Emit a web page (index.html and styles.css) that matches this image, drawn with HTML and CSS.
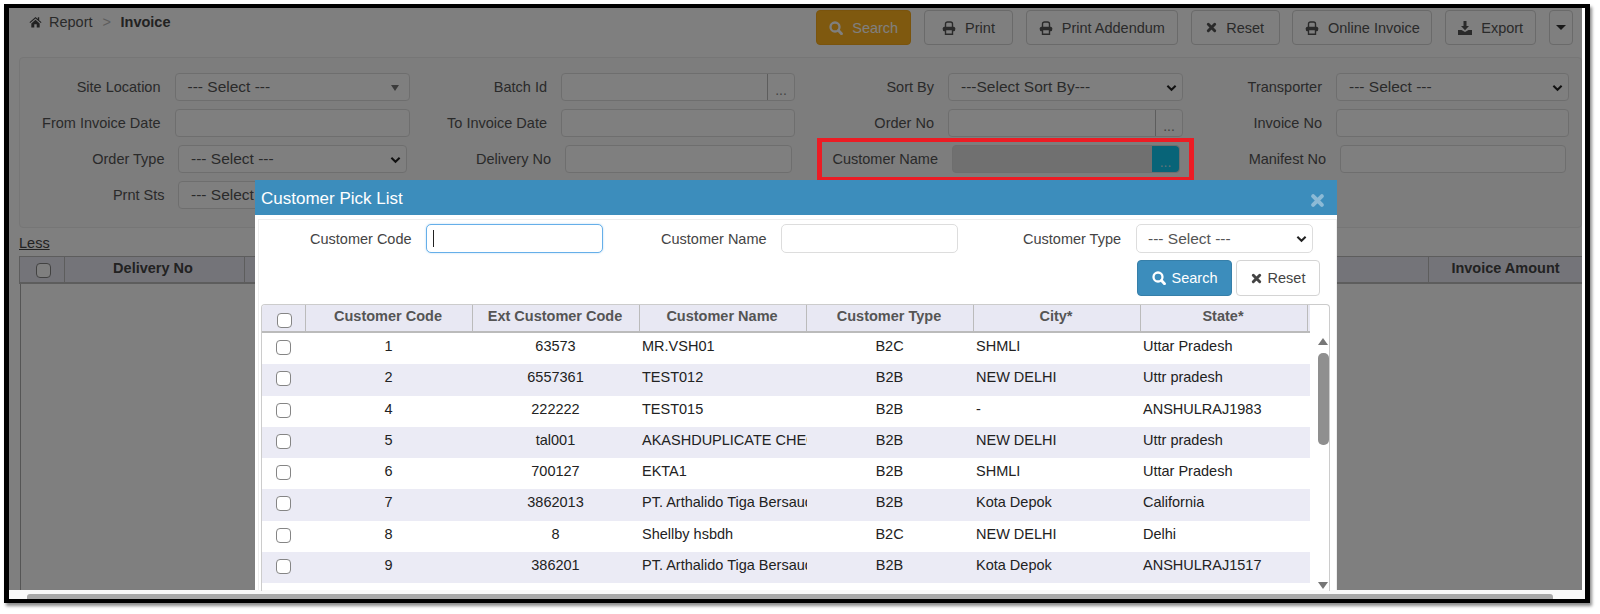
FILE: index.html
```html
<!DOCTYPE html>
<html lang="en">
<head>
<meta charset="utf-8">
<title>Invoice Report</title>
<link rel="stylesheet" href="styles.css">
</head>
<body>
<svg class="defs" width="0" height="0" aria-hidden="true">
  <symbol id="i-search" viewBox="0 0 14 14"><circle cx="6" cy="6" r="4.500" fill="none" stroke="currentColor" stroke-width="2.300"/><path d="M9.500 9.500l3 3.200" stroke="currentColor" stroke-width="2.800" fill="none" stroke-linecap="round"/></symbol>
  <symbol id="i-print" viewBox="0 0 14 14"><path d="M3.500 6V3a2 2 0 0 1 2-2h3a2 2 0 0 1 2 2v3" fill="none" stroke="currentColor" stroke-width="1.400"/><rect x="0.800" y="5.800" width="12.400" height="4.400" rx="1.500" fill="currentColor"/><path d="M3.500 8.500h7v4.800h-7z" fill="#fff" stroke="currentColor" stroke-width="1.400"/></symbol>
  <symbol id="i-x" viewBox="0 0 12 12"><path d="M2.500 2.500l7 7M9.500 2.500l-7 7" fill="none" stroke="currentColor" stroke-width="3.200" stroke-linecap="round"/></symbol>
  <symbol id="i-down" viewBox="0 0 14 14"><path d="M5.500 0h3v5H11L7 9.300 3 5h2.500zM0 9h3.500L7 11l3.500-2H14v5H0z" fill="currentColor"/></symbol>
  <symbol id="i-home" viewBox="0 0 14 12"><path d="M7 0.500L0.500 6.200l.8.900L7 2.200l5.700 4.900.8-.9L11 4V1H9.500v1.700zM2.500 7.500V12h3.200V8.500h2.600V12h3.200V7.500L7 3.600z" fill="currentColor"/></symbol>
</svg>
<div class="frame">
  <div class="page">
    <header class="topbar">
      <nav class="crumbs">
        <svg class="home"><use href="#i-home"/></svg>
        <span>Report</span><span class="sep">&gt;</span><strong>Invoice</strong>
      </nav>
      <div class="actions">
        <button class="btn btn-warn"><svg class="ico"><use href="#i-search"/></svg>Search</button>
        <button class="btn b-print"><svg class="ico"><use href="#i-print"/></svg>Print</button>
        <button class="btn b-add"><svg class="ico"><use href="#i-print"/></svg>Print Addendum</button>
        <button class="btn b-reset"><svg class="ico ico-x"><use href="#i-x"/></svg>Reset</button>
        <button class="btn b-online"><svg class="ico"><use href="#i-print"/></svg>Online Invoice</button>
        <button class="btn b-export"><svg class="ico"><use href="#i-down"/></svg>Export</button>
        <button class="btn btn-caret"><span class="caret"></span></button>
      </div>
    </header>

    <section class="filters">
      <label class="lbl">Site Location</label>
      <div class="ctl select arrow-solid">--- Select ---</div>
      <label class="lbl">Batch Id</label>
      <div class="ctl group"><span class="fill"></span><span class="dots">...</span></div>
      <label class="lbl">Sort By</label>
      <div class="ctl select">---Select Sort By---<svg class="chev" viewBox="0 0 12 8"><path d="M1.500 1.500L6 6l4.500-4.500" /></svg></div>
      <label class="lbl">Transporter</label>
      <div class="ctl select">--- Select ---<svg class="chev" viewBox="0 0 12 8"><path d="M1.500 1.500L6 6l4.500-4.500" /></svg></div>

      <label class="lbl">From Invoice Date</label>
      <div class="ctl"></div>
      <label class="lbl">To Invoice Date</label>
      <div class="ctl"></div>
      <label class="lbl">Order No</label>
      <div class="ctl group"><span class="fill"></span><span class="dots">...</span></div>
      <label class="lbl">Invoice No</label>
      <div class="ctl"></div>

      <label class="lbl in">Order Type</label>
      <div class="ctl select in">--- Select ---<svg class="chev" viewBox="0 0 12 8"><path d="M1.500 1.500L6 6l4.500-4.500" /></svg></div>
      <label class="lbl in">Delivery No</label>
      <div class="ctl in"></div>
      <label class="lbl in">Customer Name</label>
      <div class="ctl group in disabled"><span class="fill"></span><span class="dots dots-on">...</span></div>
      <label class="lbl in">Manifest No</label>
      <div class="ctl in"></div>

      <label class="lbl in">Prnt Sts</label>
      <div class="ctl select in">--- Select ---</div>
    </section>

    <a class="less">Less</a>

    <div class="grid-head">
      <div class="gh gh-check"><span class="box"></span></div>
      <div class="gh gh-del">Delivery No</div>
      <div class="gh gh-mid"></div>
      <div class="gh gh-amt">Invoice Amount</div>
    </div>
    <div class="grid-body"></div>
    <div class="hscroll"><span class="hthumb"></span></div>
  </div>

  <div class="backdrop"></div>
  <div class="annot"></div>

  <div class="modal">
    <div class="m-title"><span>Customer Pick List</span><svg class="m-close"><use href="#i-x"/></svg></div>
    <div class="m-body">
      <div class="m-form">
        <label class="m-lbl l1">Customer Code</label>
        <div class="m-in focus"><span class="text-caret"></span></div>
        <label class="m-lbl l2">Customer Name</label>
        <div class="m-in"></div>
        <label class="m-lbl l3">Customer Type</label>
        <div class="m-in m-sel">--- Select ---<svg class="chev" viewBox="0 0 12 8"><path d="M1.500 1.500L6 6l4.500-4.500" /></svg></div>
      </div>
      <div class="m-actions">
        <button class="btn btn-blue"><svg class="ico"><use href="#i-search"/></svg>Search</button>
        <button class="btn btn-plain"><svg class="ico ico-x"><use href="#i-x"/></svg>Reset</button>
      </div>
      <div class="tbl-wrap">
        <div class="tbl">
          <div class="tr th"><div class="c c0"><span class="box"></span></div><div class="c">Customer Code</div><div class="c">Ext Customer Code</div><div class="c">Customer Name</div><div class="c">Customer Type</div><div class="c">City*</div><div class="c">State*</div></div>
          <div class="tr"><div class="c c0"><span class="box"></span></div><div class="c">1</div><div class="c">63573</div><div class="c t">MR.VSH01</div><div class="c">B2C</div><div class="c t">SHMLI</div><div class="c t">Uttar Pradesh</div></div>
          <div class="tr"><div class="c c0"><span class="box"></span></div><div class="c">2</div><div class="c">6557361</div><div class="c t">TEST012</div><div class="c">B2B</div><div class="c t">NEW DELHI</div><div class="c t">Uttr pradesh</div></div>
          <div class="tr"><div class="c c0"><span class="box"></span></div><div class="c">4</div><div class="c">222222</div><div class="c t">TEST015</div><div class="c">B2B</div><div class="c t">-</div><div class="c t">ANSHULRAJ1983</div></div>
          <div class="tr"><div class="c c0"><span class="box"></span></div><div class="c">5</div><div class="c">tal001</div><div class="c t">AKASHDUPLICATE CHECK</div><div class="c">B2B</div><div class="c t">NEW DELHI</div><div class="c t">Uttr pradesh</div></div>
          <div class="tr"><div class="c c0"><span class="box"></span></div><div class="c">6</div><div class="c">700127</div><div class="c t">EKTA1</div><div class="c">B2B</div><div class="c t">SHMLI</div><div class="c t">Uttar Pradesh</div></div>
          <div class="tr"><div class="c c0"><span class="box"></span></div><div class="c">7</div><div class="c">3862013</div><div class="c t">PT. Arthalido Tiga Bersaudara</div><div class="c">B2B</div><div class="c t">Kota Depok</div><div class="c t">California</div></div>
          <div class="tr"><div class="c c0"><span class="box"></span></div><div class="c">8</div><div class="c">8</div><div class="c t">Shellby hsbdh</div><div class="c">B2C</div><div class="c t">NEW DELHI</div><div class="c t">Delhi</div></div>
          <div class="tr"><div class="c c0"><span class="box"></span></div><div class="c">9</div><div class="c">386201</div><div class="c t">PT. Arthalido Tiga Bersaudara</div><div class="c">B2B</div><div class="c t">Kota Depok</div><div class="c t">ANSHULRAJ1517</div></div>
        </div>
        <div class="vscroll"><span class="up"></span><span class="vthumb"></span><span class="dn"></span></div>
      </div>
    </div>
  </div>
</div>
</body>
</html>
```
FILE: styles.css
```css
* { box-sizing: border-box; }
html, body { margin: 0; padding: 0; height: 100%; background: #fff; overflow: hidden; }
body { font-family: "Liberation Sans", Arial, sans-serif; font-size: 14.500px; color: #555; }
.defs { position: absolute; }
button { font: inherit; }

.frame { position: relative; margin: 4px 0 0 4px; width: 1586px; height: 599px; border: 4px solid #000; border-left-width: 5px; border-right-width: 5px; box-shadow: 2px 3px 3px rgba(0,0,0,.45); overflow: hidden; }
.page { width: 1576px; height: 591px; display: flex; flex-direction: column; background: #fff; }

.topbar { display: flex; justify-content: space-between; height: 49px; padding: 2px 12px 0 0; background: #fff; flex: none; }
.crumbs { display: flex; align-items: flex-start; padding: 4px 0 0 20px; }
.home { width: 13px; height: 12px; margin: 2px 7px 0 0; color: #444; }
.sep { margin: 0 9.500px 0 10px; color: #bbb; }
.crumbs strong { color: #444; font-weight: 700; }
.actions { display: flex; gap: 12.800px; align-items: flex-start; }

.btn { display: inline-flex; align-items: center; justify-content: center; gap: 9px; height: 35px; background: #fff; border: 1px solid #d4d4d4; border-radius: 4px; color: #555; padding: 0; white-space: nowrap; }
.ico { width: 14px; height: 14px; flex: none; }
.ico-x { width: 11px; height: 11px; }
.btn-warn { width: 95px; background: #ffb21e; border-color: #f5a81a; color: #fff; }
.b-print { width: 89px; }
.b-add { width: 152px; }
.b-reset { width: 89px; }
.b-online { width: 140px; }
.b-export { width: 91px; }
.btn-caret { width: 24px; }
.caret { width: 0; height: 0; border: 5px solid transparent; border-top-color: #333; border-bottom: 0; }

.filters { margin: 0 0 0 10px; width: 1563px; height: 171px; border: 1px solid #ececec; border-radius: 4px; background: #fafafa; padding: 15px 0 0 0; display: grid; grid-template-columns: 154.500px 235.500px 151px 234px 153px 235px 153px 233px; grid-auto-rows: 28px; row-gap: 8px; flex: none; align-content: start; }
.lbl { display: flex; justify-content: flex-end; align-items: center; padding-right: 14px; white-space: nowrap; }
.lbl.in { padding-right: 10px; }
.ctl { background: #fff; border: 1px solid #ddd; border-radius: 4px; min-width: 0; }
.ctl.in { margin: 0 3.500px; }
.select { position: relative; display: flex; align-items: center; padding-left: 12px; font-size: 15.500px; color: #555; }
.chev { position: absolute; right: 5px; top: 10px; width: 11px; height: 8px; fill: none; stroke: #222; stroke-width: 2.200; }
.arrow-solid::after { content: ""; position: absolute; right: 10px; top: 11px; border: 4.500px solid transparent; border-top: 6px solid #777; border-bottom: 0; }
.group { display: flex; }
.fill { flex: 1; }
.dots { width: 27px; border-left: 1px solid #bbb; border-radius: 0 4px 4px 0; text-align: center; line-height: 32px; font-size: 14px; color: #888; }
.dots-on { background: #10c8f0; border-color: #10c8f0; color: #bfe6f2; }
.disabled { background: #e0e0e0; }

.less { margin: 7px 0 0 10px; height: 16px; line-height: 16px; text-decoration: underline; flex: none; width: 32px; color: #444; }
.grid-head { margin: 5px 0 0 10px; height: 28px; width: 1563px; display: flex; background: #e8e8f3; border: solid #bbb; border-width: 1px 0 2px 1px; flex: none; font-weight: 700; color: #444; }
.gh { display: flex; justify-content: center; align-items: flex-start; padding-top: 3px; border-right: 1px solid #bbb; }
.gh-check { width: 45px; }
.gh-del { width: 180px; padding-right: 3px; }
.gh-mid { width: 1184px; }
.gh-amt { flex: 1; border-right: 0; }
.box { display: block; width: 15px; height: 15px; border: 1.500px solid #858585; border-radius: 4px; background: #fff; }
.gh-check .box { margin: 3px 0 0 2px; }
.grid-body { flex: 1; margin-left: 11px; border-left: 1px solid #aaa; }
.hscroll { height: 9px; padding-top: 4px; background: #f9f9f9; flex: none; }
.hthumb { display: block; height: 5px; margin-left: 18px; width: 1526px; background: #a8a8a8; border-radius: 3px 3px 0 0; }

.backdrop { position: absolute; left: 0; top: 0; width: 1573px; height: 582px; background: rgba(0,0,0,.5); }
.annot { position: absolute; left: 808px; top: 130px; width: 377px; height: 43px; border: solid #ec1c24; border-width: 4px 5px; }

.modal { position: absolute; left: 246px; top: 172px; width: 1082px; height: 410px; background: #fff; color: #444; }
.m-title { height: 35px; background: #3c8dbc; color: #fff; font-size: 17px; display: flex; align-items: center; justify-content: space-between; padding: 0 12px 0 6px; }
.m-title span { position: relative; top: 1px; }
.m-close { width: 15px; height: 15px; margin-top: 6px; color: #8cbad6; }
.m-body { margin: 4px 0 0 3px; width: 1079px; height: 371px; border: solid #eee; border-width: 1px 1px 0 1px; padding-top: 4px; }
.m-form { display: flex; align-items: center; height: 29px; padding-left: 51px; }
.m-lbl { white-space: nowrap; flex: none; }
.l1 { width: 101px; }
.l2 { width: 105px; margin-left: 58px; }
.l3 { width: 98px; margin-left: 65px; }
.m-in { width: 177px; height: 29px; margin-left: 15px; border: 1px solid #ddd; border-radius: 5px; background: #fff; flex: none; }
.m-in.focus { border-color: #66afe9; display: flex; align-items: center; padding-left: 6px; box-shadow: 0 0 2px rgba(102,175,233,.5); }
.text-caret { width: 1px; height: 17px; background: #222; }
.m-sel { position: relative; display: flex; align-items: center; padding-left: 11px; font-size: 15.500px; color: #555; }
.m-actions { display: flex; justify-content: flex-end; gap: 4px; margin-top: 7px; padding-right: 16px; }
.m-actions .btn { height: 36px; gap: 6px; }
.btn-blue { width: 95px; background: #3c8dbc; border-color: #367fa9; color: #fff; }
.btn-plain { width: 84px; color: #444; }
.tbl-wrap { position: relative; margin: 8px 0 0 2px; width: 1069px; height: 287px; border: solid #ccc; border-width: 1px 1px 0 1px; border-radius: 4px 4px 0 0; display: flex; overflow: hidden; }
.tbl { width: 1048px; flex: none; }
.tr { display: grid; grid-template-columns: 44px repeat(6, 167px); height: 31.300px; }
.tr:nth-child(odd) { background: #ebebf5; }
.tr.th { height: 28px; background: #e8e8f3; border-bottom: 2px solid #bbb; font-weight: 700; }
.c { text-align: center; padding: 5px 2px 0 0; white-space: nowrap; overflow: hidden; color: #222; }
.c.t { text-align: left; padding: 5px 0 0 2px; }
.c0 { padding: 7px 0 0 14px; }
.th .c { padding-top: 3px; border-right: 1px solid #bbb; color: #555; }
.th .c0 { padding: 8px 0 0 15px; }
.vscroll { flex: 1; position: relative; }
.up, .dn { position: absolute; left: 8px; border: 5.500px solid transparent; }
.up { top: 33px; border-bottom: 7px solid #777; border-top: 0; }
.dn { top: 277px; border-top: 7px solid #777; border-bottom: 0; }
.vthumb { position: absolute; left: 8px; top: 48px; width: 11px; height: 92px; background: #8f8f8f; border-radius: 5px; }
```
